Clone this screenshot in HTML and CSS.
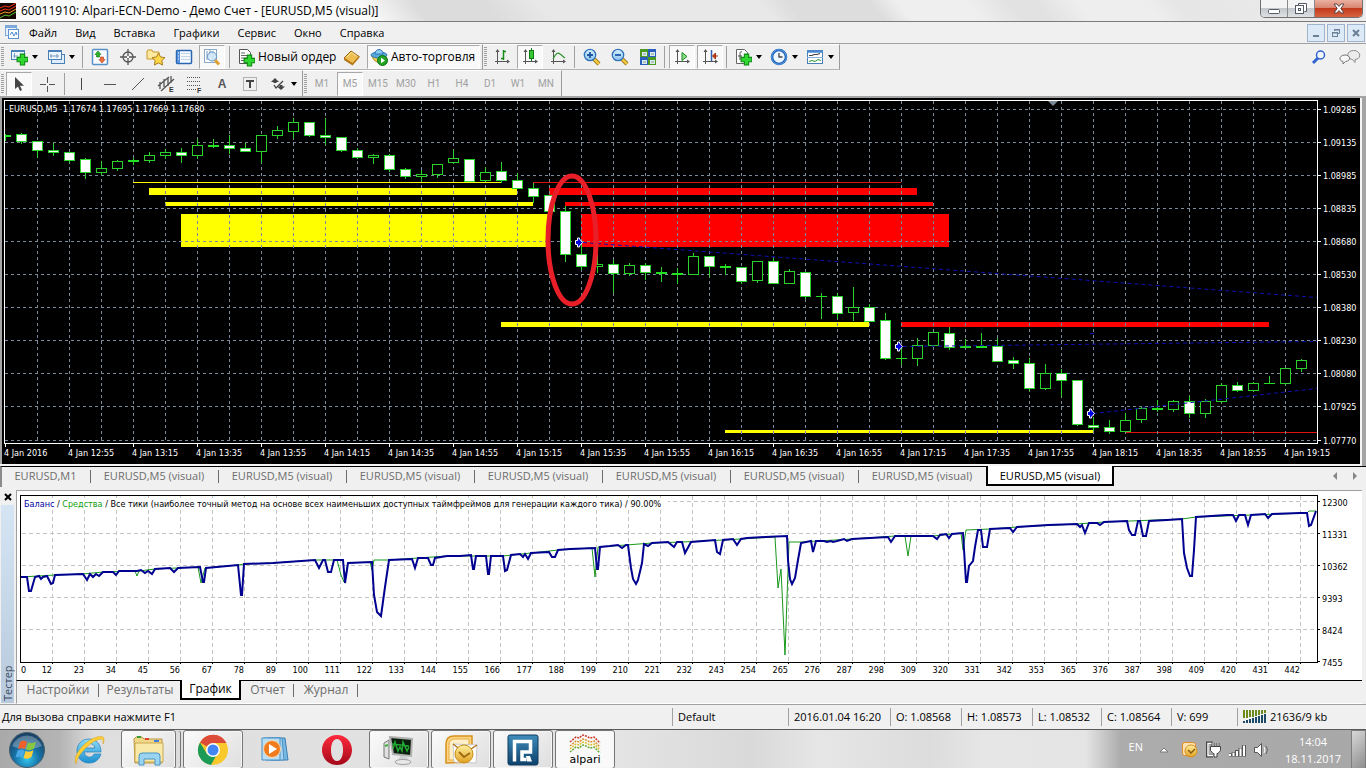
FILE: index.html
```html
<!DOCTYPE html>
<html lang="ru">
<head>
<meta charset="utf-8">
<title>60011910: Alpari-ECN-Demo</title>
<link rel="stylesheet" href="styles.css">
</head>
<body>
<svg class="defs" aria-hidden="true">
  <defs>
    <linearGradient id="glass" x1="0" y1="0" x2="0" y2="1"><stop offset="0" stop-color="#d8f0ff"/><stop offset="1" stop-color="#8cc4f0"/></linearGradient>
    <linearGradient id="gold" x1="0" y1="0" x2="0" y2="1"><stop offset="0" stop-color="#fff0a0"/><stop offset="1" stop-color="#e0a020"/></linearGradient>
    <radialGradient id="orb" cx=".5" cy=".75" r=".75"><stop offset="0" stop-color="#35c8f0"/><stop offset=".45" stop-color="#1774a8"/><stop offset="1" stop-color="#1b3a5c"/></radialGradient>
    <linearGradient id="ie" x1="0" y1="0" x2="0" y2="1"><stop offset="0" stop-color="#8fdcf8"/><stop offset="1" stop-color="#1c8fd0"/></linearGradient>
    <linearGradient id="opera" x1="0" y1="0" x2="0" y2="1"><stop offset="0" stop-color="#ff2a3c"/><stop offset="1" stop-color="#a3081a"/></linearGradient>
    <linearGradient id="tile" x1="0" y1="0" x2="0" y2="1"><stop offset="0" stop-color="#3f8dbb"/><stop offset="1" stop-color="#0e416b"/></linearGradient>
    <symbol id="plus" viewBox="0 0 12 12"><path d="M4 1h4v3h3v4H8v3H4V8H1V4h3z" fill="#2fd62f" stroke="#0b8a12"/></symbol>
    <symbol id="axes" viewBox="0 0 18 18"><path d="M4.500 2v14M2 13.500h14" stroke="#555" fill="none"/><path d="M4.500 1l-2 3h4zM17 13.500l-3-2v4z" fill="#555"/></symbol>
  </defs>
</svg>

<header class="titlebar">
  <svg class="app-icon" width="16" height="16" viewBox="0 0 16 16"><rect width="16" height="16" fill="#140800"/><path d="M0 5l5-2 4 1 7-4M0 8l5-2 4 1 7-4" stroke="#f03018" fill="none"/><path d="M0 11l5-2 4 1 7-4" stroke="#f0a020" fill="none"/><path d="M0 15l5-3 4 1 7-4" stroke="#58c030" fill="none"/></svg>
  <h1 class="title">60011910: Alpari-ECN-Demo - Демо Счет - [EURUSD,M5 (visual)]</h1>
  <div class="window-buttons">
    <button class="wb" aria-label="Свернуть"><svg width="14" height="12"><rect x="1.500" y="6.500" width="11" height="4" rx="1" fill="#fff" stroke="#555a66"/></svg></button>
    <button class="wb" aria-label="Развернуть"><svg width="14" height="13"><path d="M4.500 3.500v-2h8v8h-2" fill="#fff" stroke="#555a66"/><rect x="1.500" y="3.500" width="8" height="8" fill="#fff" stroke="#555a66"/><rect x="4.500" y="6.500" width="2" height="2" fill="none" stroke="#555a66"/></svg></button>
    <button class="wb wb-close" aria-label="Закрыть"><svg width="14" height="12"><path d="M2 1h3l2 2.500L9 1h3L8.800 5.500 12 10H9L7 7.500 5 10H2l3.200-4.500z" fill="#fff" stroke="#5e4444"/></svg></button>
  </div>
</header>

<nav class="menubar">
  <svg width="16" height="16" viewBox="0 0 16 16"><rect x="1.500" y=".5" width="11" height="10" fill="#e8f2fc" stroke="#7ea9d8"/><path d="M1 2h12" stroke="#7ea9d8" stroke-width="2"/><rect x="4.500" y="4.500" width="10" height="9" fill="#fff" stroke="#5c92d0"/><path d="M6 10l2-3 2 4 2-4 1 3" stroke="#4a86cc" fill="none"/></svg>
  <button>Файл</button><button>Вид</button><button>Вставка</button><button>Графики</button><button>Сервис</button><button>Окно</button><button>Справка</button>
  <div class="mdi">
    <button aria-label="Свернуть окно"><svg width="10" height="10"><path d="M2 8h6" stroke="#6b7f95" stroke-width="2"/></svg></button>
    <button aria-label="Восстановить окно"><svg width="10" height="10"><path d="M3.500 3V1.500h5v4H7M3 2h6M1 5h6" stroke="#6b7f95" fill="none"/><rect x="1.500" y="4.500" width="5" height="4" fill="none" stroke="#6b7f95"/></svg></button>
    <button aria-label="Закрыть окно"><svg width="10" height="10"><path d="M2 2l6 6M8 2L2 8" stroke="#6b7f95" stroke-width="2"/></svg></button>
  </div>
</nav>

<div class="toolbar">
  <div class="bar">
    <span class="grip"></span>
    <button class="tool drop" aria-label="Новый график"><svg width="18" height="18"><rect x="1.500" y="2.500" width="13" height="9" fill="#eef6ff" stroke="#4a80b8"/><path d="M1 3h14" stroke="#4a80b8" stroke-width="2"/><path d="M4.500 5v5M3 8h5" stroke="#7a9cc0"/><use href="#plus" x="6" y="5" width="13" height="13"/></svg></button>
    <button class="tool drop" aria-label="Профили"><svg width="18" height="18"><rect x="4.500" y="6.500" width="13" height="9" fill="#e0eefc" stroke="#4a80b8"/><rect x="1.500" y="2.500" width="13" height="9" fill="#eef6ff" stroke="#4a80b8"/><path d="M1 3h14" stroke="#4a80b8" stroke-width="2"/><path d="M4 6v4M3 8h9M10 6v4" stroke="#7a9cc0"/></svg></button>
    <span class="sep"></span>
    <button class="tool" aria-label="Обзор рынка"><svg width="18" height="18"><rect x="1.500" y="1.500" width="15" height="15" rx="1" fill="#f8fcff" stroke="#5a90c8" stroke-width="1.500"/><path d="M7 3l3 3.500H8.500V9h-3V6.500H4z" fill="#30b030" stroke="#087808" stroke-width=".6"/><path d="M11 15l-3-3.500h1.500V9h3v2.500H14z" fill="#f07040" stroke="#b03010" stroke-width=".6"/></svg></button>
    <button class="tool" aria-label="Окно данных"><svg width="18" height="18"><circle cx="9" cy="9" r="5" fill="none" stroke="#555" stroke-width="1.300"/><path d="M9 1v7M9 10v7M1 9h7M10 9h7" stroke="#555" stroke-width="1.300"/></svg></button>
    <button class="tool" aria-label="Навигатор"><svg width="20" height="18"><path d="M1 11V3l1-1h4l1 2h6v7z" fill="#ffe9a0" stroke="#c8982c"/><path d="M12.500 5l2 4 4.500.6-3.200 3 .8 4.400-4.100-2.100L8.400 17l.8-4.400L6 9.600l4.500-.6z" fill="#ffd84a" stroke="#a87c18"/></svg></button>
    <button class="tool" aria-label="Терминал"><svg width="18" height="18"><rect x="1.500" y="2.500" width="15" height="13" rx="1" fill="#f4faff" stroke="#2866b0" stroke-width="1.500"/><rect x="2" y="3" width="3" height="12" fill="#5590dc"/><path d="M6 5.500h9M6 8.500h9M6 11.500h9" stroke="#c4d4e4"/><path d="M3 5h1M3 8h1M3 11h1" stroke="#fff"/></svg></button>
    <button class="tool pressed" aria-label="Тестер"><svg width="18" height="18"><rect x="1.500" y="1.500" width="12" height="13" fill="#fff" stroke="#8aa8c8"/><path d="M4 3v9M7 2v7M10 3v9" stroke="#7a98b8"/><path d="M12 12l4 4.500" stroke="#e0a030" stroke-width="3"/><circle cx="9" cy="8.500" r="4.500" fill="#cfe8fa" fill-opacity=".8" stroke="#5f93c4"/></svg></button>
    <span class="sep"></span>
    <button class="tool labelled order"><svg width="18" height="20"><path d="M2.500 2.500h8l3 3v11h-11z" fill="#fff" stroke="#555"/><path d="M4 6h4M4 8.500h7M4 11h7M4 13.500h4" stroke="#666"/><use href="#plus" x="6" y="7" width="13" height="13"/></svg>Новый ордер</button>
    <button class="tool" aria-label="MetaEditor"><svg width="18" height="18"><path d="M1 10L8 3l8 5.500-6.500 7.500z" fill="#f0bd50" stroke="#9a6414"/><path d="M1 10v2l8.500 5.500 7-8v-1.500L9.500 15z" fill="#b47818"/><path d="M4 9l4.500-4.500 5 3.500" stroke="#ffe8a0" fill="none"/></svg></button>
    <button class="tool labelled pressed auto"><svg width="18" height="18"><path d="M2 8c2 8 12 9 14 0z" fill="#f0c850" stroke="#b08a20"/><ellipse cx="9" cy="7" rx="8" ry="3" fill="#58a8dc" stroke="#2f78b0"/><path d="M5 6c0-6 8-6 8 0z" fill="#8cccf0" stroke="#2f78b0"/><circle cx="12.500" cy="12.500" r="5" fill="#22a322" stroke="#107010"/><path d="M11 9.800v5.400l4-2.700z" fill="#fff"/></svg>Авто-торговля</button>
  </div>
  <div class="bar charting">
    <span class="grip"></span>
    <button class="tool" aria-label="Бары"><svg width="18" height="18"><use href="#axes" width="18" height="18"/><path d="M10.500 2v10M8 10.500h2.500M10.500 3.500H13" stroke="#188a18" stroke-width="1.500" fill="none"/></svg></button>
    <button class="tool pressed" aria-label="Свечи"><svg width="18" height="18"><use href="#axes" width="18" height="18"/><path d="M10.500 0v13" stroke="#0b7a12"/><rect x="8.500" y="2.500" width="4" height="8" fill="#36c636" stroke="#0b7a12"/></svg></button>
    <button class="tool" aria-label="Линия"><svg width="18" height="18"><use href="#axes" width="18" height="18"/><path d="M4 11c3-6 5-7 7-5 2 1 3 3 5 4" stroke="#2a942a" fill="none" stroke-width="1.200"/></svg></button>
    <span class="sep"></span>
    <button class="tool" aria-label="Приблизить"><svg width="18" height="18"><path d="M11 11l5 5" stroke="#8a6414" stroke-width="4"/><path d="M11 11l5 5" stroke="#f0c840" stroke-width="2.500"/><circle cx="7" cy="7" r="5.700" fill="url(#glass)" stroke="#2f72b8" stroke-width="1.300"/><path d="M4 7h6M7 4v6" stroke="#2058a0" stroke-width="1.800"/></svg></button>
    <button class="tool" aria-label="Отдалить"><svg width="18" height="18"><path d="M11 11l5 5" stroke="#8a6414" stroke-width="4"/><path d="M11 11l5 5" stroke="#f0c840" stroke-width="2.500"/><circle cx="7" cy="7" r="5.700" fill="url(#glass)" stroke="#2f72b8" stroke-width="1.300"/><path d="M4 7h6" stroke="#2058a0" stroke-width="1.800"/></svg></button>
    <button class="tool" aria-label="Плитка"><svg width="18" height="18"><path d="M1 1h8v8H1zM9 9h8v8H9z" fill="#4a9a24"/><path d="M9 1h8v8H9zM1 9h8v8H1z" fill="#2a5fc0"/><path d="M3 4h5v4H3zM11 4h5v4h-5zM3 12h5v4H3zM11 12h5v4h-5z" fill="#dceaf4"/><path d="M4 6h3M12 6h3M4 14h3M12 14h3" stroke="#7fa080"/></svg></button>
    <span class="sep"></span>
    <button class="tool pressed" aria-label="Автопрокрутка"><svg width="18" height="18"><use href="#axes" width="18" height="18"/><path d="M9 4.500v8l5-4z" fill="#8cdc8c" stroke="#188a18"/></svg></button>
    <button class="tool pressed" aria-label="Сдвиг графика"><svg width="18" height="18"><use href="#axes" width="18" height="18"/><path d="M10.500 2v11" stroke="#2f62b0" stroke-width="1.500"/><path d="M17 8h-5M14.500 5L11.500 8l3 3z" fill="#d04a20" stroke="#a83010"/></svg></button>
    <span class="sep"></span>
    <button class="tool drop" aria-label="Индикаторы"><svg width="18" height="18"><path d="M2.500 1.500h8l3 3v11h-11z" fill="#fff" stroke="#666"/><path d="M8 4C6 3 6 5 6 7v5M4 8h4" stroke="#444" fill="none"/><use href="#plus" x="6" y="5" width="13" height="13"/></svg></button>
    <button class="tool drop" aria-label="Периоды"><svg width="18" height="18"><circle cx="9" cy="9" r="7" fill="#eef6ff" stroke="#1c5cb0" stroke-width="2.600"/><circle cx="9" cy="9" r="7.300" fill="none" stroke="#5ca4ec"/><path d="M9 5v4h3.500" stroke="#444" fill="none" stroke-width="1.300"/></svg></button>
    <button class="tool drop" aria-label="Шаблоны"><svg width="18" height="18"><rect x="1.500" y="2.500" width="15" height="13" fill="#fff" stroke="#4a80b8"/><path d="M1 3.500h16" stroke="#4a88d0" stroke-width="2.500"/><path d="M1 9.500h16" stroke="#8ab0d8"/><path d="M3 7.500h3l2-1h3l3-1" stroke="#444" fill="none" stroke-width="1.200"/><path d="M3 13.500l3-1 3 1 3-2 3 1" stroke="#2a942a" fill="none"/></svg></button>
  </div>
  <div class="bar-right">
    <button class="tool" aria-label="Поиск"><svg width="16" height="16"><path d="M2 14l5-5" stroke="#2f62d0" stroke-width="3"/><circle cx="9.500" cy="6" r="4" fill="#f4f8ff" stroke="#2f62d0" stroke-width="1.500"/></svg></button>
    <button class="tool" aria-label="Чат"><svg width="22" height="18"><path d="M16 11.500v3l-2.500-3C6 10.500 8 2.500 14.500 2.500c7.500 0 8.500 8.500 1.500 9z" fill="#ececec" stroke="#8a8a8a"/><path d="M4 13.500v2.500l2.500-2.500c6-.5 5-6.500-.5-6.500s-7 5.500-2 6.500z" fill="#f8f8f8" stroke="#777"/></svg></button>
  </div>
</div>

<div class="toolbar">
  <div class="bar lower">
    <span class="grip"></span>
    <button class="tool pressed" aria-label="Курсор"><svg width="18" height="18"><path d="M5 2v12l3-2.500L10 16l2-1-2-4.200h4z" fill="#444"/></svg></button>
    <button class="tool" aria-label="Перекрестие"><svg width="18" height="18"><path d="M9.500 2v6M9.500 11v6M2 9.500h6M11 9.500h6" stroke="#555"/></svg></button>
    <span class="sep"></span>
    <button class="tool" aria-label="Вертикальная линия"><svg width="18" height="18"><path d="M8.500 3v12" stroke="#444"/></svg></button>
    <button class="tool" aria-label="Горизонтальная линия"><svg width="18" height="18"><path d="M3 9.500h12" stroke="#555"/></svg></button>
    <button class="tool" aria-label="Трендовая линия"><svg width="18" height="18"><path d="M3 15L15 3" stroke="#555"/></svg></button>
    <button class="tool" aria-label="Канал"><svg width="18" height="18"><path d="M1 11L12 2M4 16L17 4M3 7v7M7 4v8M11 3v8M14 1v7" stroke="#555" stroke-width="1.300"/><text x="12" y="17" class="glyph">E</text></svg></button>
    <button class="tool" aria-label="Фибоначчи"><svg width="18" height="18"><path d="M2 2.500h14M2 6.500h14M2 10.500h14M2 14.500h9" stroke="#555" stroke-dasharray="1 1"/><text x="12" y="18" class="glyph">F</text></svg></button>
    <button class="tool letter">A</button>
    <button class="tool" aria-label="Метка"><svg width="18" height="18"><rect x="2.500" y="2.500" width="13" height="13" fill="none" stroke="#777" stroke-dasharray="1 1"/><path d="M5 6h8M9 6v7" stroke="#444" stroke-width="2"/></svg></button>
    <button class="tool drop" aria-label="Стрелки"><svg width="18" height="18"><path d="M6 3l4 4H7.500v1h-3V7H2zM12 15l-4-3.500h2.500V10h3v1.500H16z" fill="#444"/><path d="M5 10l2 3 7-7" stroke="#444" stroke-width="1.300" fill="none"/></svg></button>
  </div>
  <div class="bar lower periods">
    <span class="grip"></span>
    <button class="tool">M1</button><button class="tool pressed">M5</button><button class="tool">M15</button><button class="tool">M30</button><button class="tool">H1</button><button class="tool">H4</button><button class="tool">D1</button><button class="tool">W1</button><button class="tool">MN</button>
  </div>
</div>

<main>
  <section class="market">
    <svg id="market" class="chart" viewBox="0 96 1366 370" role="img" aria-label="EURUSD,M5"></svg>
  </section>
  <nav class="tabs doc-tabs">
    <button>EURUSD,M1</button><button>EURUSD,M5 (visual)</button><button>EURUSD,M5 (visual)</button><button>EURUSD,M5 (visual)</button><button>EURUSD,M5 (visual)</button><button>EURUSD,M5 (visual)</button><button>EURUSD,M5 (visual)</button><button>EURUSD,M5 (visual)</button><button class="active">EURUSD,M5 (visual)</button>
    <svg class="tab-arrows" width="26" height="10"><path d="M5 1v8L1 5zM21 1v8l4-4z" fill="#858585"/></svg>
  </nav>
  <section class="tester">
    <aside class="tester-side">
      <button aria-label="Закрыть тестер"><svg width="8" height="8"><path d="M1 1l6 6M7 1L1 7" stroke="#000" stroke-width="2"/></svg></button>
      <span class="tester-name">Тестер</span>
    </aside>
    <div class="tester-body">
      <svg id="tester" class="chart" viewBox="16 491 1346 189" role="img" aria-label="График баланса"></svg>
      <nav class="tabs report-tabs">
        <button>Настройки</button><button>Результаты</button><button class="active">График</button><button>Отчет</button><button>Журнал</button>
      </nav>
    </div>
  </section>
</main>

<footer class="status">
  <span>Для вызова справки нажмите F1</span><span>Default</span><span>2016.01.04 16:20</span><span>O: 1.08568</span><span>H: 1.08573</span><span>L: 1.08532</span><span>C: 1.08564</span><span>V: 699</span>
  <span class="traffic"><svg width="24" height="14" viewBox="0 0 24 14"><path d="M1 0v8M4 0v8M7 0v7M10 0v7M13 0v6M16 0v5M19 0v4M22 0v3" stroke="#6d8a1c" stroke-width="2"/><path d="M1 11v2M4 10v3M7 9v4M10 8v5M13 7v6M16 6v7M19 5v8M22 4v9" stroke="#1d4a66" stroke-width="2"/></svg>21636/9 kb</span>
</footer>

<nav class="taskbar">
  <button class="start" aria-label="Пуск"><svg width="38" height="38" viewBox="0 0 38 38"><circle cx="19" cy="19" r="17.500" fill="url(#orb)" stroke="#46606f"/><path d="M4 15a16 16 0 0 1 30 0c-8 4-22 4-30 0z" fill="#fff" opacity=".28"/><path d="M12 11c3-2 5-1 7 0l-2 7c-2-1-4-1-7 0z" fill="#f0602c"/><path d="M20 11.500c3 1 5 1 8-1l-2 7c-3 2-5 2-8 1z" fill="#88c840"/><path d="M9.500 19.500c3-1.500 5-1 7 0l-2 7c-2-1-4-1-7 0z" fill="#48a8e8"/><path d="M17.500 20c3 1 5 1 8-1l-2 7c-3 2-5 2-8 1z" fill="#ffcc38"/></svg></button>
  <button class="task" aria-label="Internet Explorer"><svg width="34" height="34" viewBox="0 0 34 34"><path d="M29 21c-2 6-6 9-12 9C10 30 5 25 5 18S10 6 17 6s12 5 12 13H12c1 6 8 7 10 2zM12 15h11c-1-6-10-6-11 0z" fill="url(#ie)" stroke="#1a80be" stroke-width=".7"/><path d="M4 31C0 24 11 8 25 4c8-2 8 2 6 7 1-5-1-6-6-4C15 11 4 25 4 31z" fill="#ffd038" stroke="#d09c14" stroke-width=".5"/></svg></button>
  <button class="task running stacked" aria-label="Проводник"><svg width="34" height="34" viewBox="0 0 34 34"><path d="M2 6l2-2h6l2 2h18v24H3z" fill="#f0d888" stroke="#b89440"/><path d="M5 4h4" stroke="#3a9b3a" stroke-width="2"/><path d="M13 6h4" stroke="#e04030" stroke-width="2"/><path d="M22 8h5" stroke="#4080d8" stroke-width="2"/><path d="M3 10h28v19H3z" fill="#f8e9a8" stroke="#caa850"/><path d="M7 32v-9q0-3 3-3h15q3 0 3 3v9h-5v-6H12v6z" fill="#9ad4f0" stroke="#4a96c8"/></svg></button>
  <button class="task running" aria-label="Chrome"><svg width="32" height="32" viewBox="0 0 32 32"><circle cx="16" cy="16" r="15" fill="#f8c82c"/><path d="M16 16L3 8.500A15 15 0 0 1 29.500 9H16z" fill="#dd4b39"/><path d="M3 8.500L10 20l6 3 4-3-6 11A15 15 0 0 1 3 8.500z" fill="#1b9b55"/><circle cx="16" cy="16" r="7" fill="#fff"/><circle cx="16" cy="16" r="5.500" fill="#4285f4"/></svg></button>
  <button class="task" aria-label="Media Player"><svg width="32" height="30" viewBox="0 0 32 30"><path d="M9 3h17l3 22H12z" fill="#78b8e0" stroke="#3c80b4"/><path d="M5 3h18l2 22H7z" fill="#a8d4f0" stroke="#4a90c4"/><path d="M3 3h18v22H3z" fill="#b8def4" stroke="#4a90c4"/><circle cx="13" cy="14" r="8.500" fill="#f07c20" stroke="#fbd8b0"/><path d="M10 9v10l8-5z" fill="#fff"/></svg></button>
  <button class="task" aria-label="Opera"><svg width="32" height="32" viewBox="0 0 32 32"><path fill-rule="evenodd" d="M16 1C7 1 1 8 1 16s6 15 15 15 15-7 15-15S25 1 16 1zm0 4c4 0 6 5 6 11s-2 11-6 11-6-5-6-11 2-11 6-11z" fill="url(#opera)"/></svg></button>
  <button class="task running" aria-label="Монитор"><svg width="34" height="32" viewBox="0 0 34 32"><path d="M2 9l5-3v19l-5-2z" fill="#e0e0e0" stroke="#777"/><path d="M3 12l3-1" stroke="#3db03d" stroke-width="2"/><path d="M8 3l22 2-1 17-18-2z" fill="#0a1e0c" stroke="#b0b0b0" stroke-width="2"/><path d="M11 15l2-7 3 9 2-4 2 4 1-9 4 9 2-4M10 10l17 2" stroke="#22a834" stroke-width="1.500" fill="none"/><path d="M18 22l-2 5h11l-3-5z" fill="#d0d0d0"/><ellipse cx="21" cy="28" rx="8" ry="2.500" fill="#e8e8e8" stroke="#a0a0a0"/></svg></button>
  <button class="task running" aria-label="Outlook"><svg width="36" height="32" viewBox="0 0 36 32"><path d="M3 29V10q0-8 8-8h18v26z" fill="#fbd583" stroke="#d8901c" stroke-width="1.500"/><path d="M6 26V11q0-6 6-6h14v21z" fill="#fff0c8" stroke="#e8aa40"/><path d="M10 10l24 1-1 18-22-1z" fill="#fff" stroke="#c8c8c8"/><path d="M10 10l12 9 12-8" fill="none" stroke="#b07820" stroke-width="1.500"/><circle cx="21" cy="20" r="9" fill="url(#gold)" stroke="#c88c14"/><path d="M16 18l5 5 6-4" stroke="#a06c10" stroke-width="2" fill="none"/></svg></button>
  <button class="task running" aria-label="R"><svg width="32" height="32" viewBox="0 0 32 32"><rect x="1" y="1" width="30" height="30" rx="2" fill="url(#tile)" stroke="#0c3c60"/><path d="M7.500 27.500V7.500H23.500V18H15v7.500h4.500" stroke="#fff" stroke-width="3.500" fill="none"/><path d="M19 22h4l2 5.500h-5z" fill="#fff"/></svg></button>
  <button class="task running current"><svg width="32" height="19" viewBox="0 0 32 19"><g fill="none" stroke-width="1.500" stroke-dasharray="2 1"><path d="M1 8l6-5 3 1 4-3 3 1 4 2 4-1 6 6" stroke="#c83a28"/><path d="M1 12l6-5 3 1 4-3 3 1 4 2 4-1 6 6" stroke="#d89030"/><path d="M1 15l6-5 3 1 4-3 3 1 4 2 4-1 6 6" stroke="#d8c030"/><path d="M1 18l6-5 3 1 4-3 3 1 4 2 4-1 6 6" stroke="#6aa838"/></g></svg><span>alpari</span></button>
  <div class="tray">
    <span class="lang">EN</span>
    <svg class="more" width="10" height="8"><path d="M1 6l4-4 4 4z" fill="#fff" stroke="#777"/></svg>
    <svg width="18" height="18"><rect x="1.500" y="1.500" width="13" height="13" rx="2" fill="#fbe0b0" stroke="#e08a28"/><circle cx="10" cy="10" r="6" fill="url(#gold)" stroke="#d8901c"/><path d="M7 9l3 3 4-4" stroke="#8a5a10" stroke-width="1.500" fill="none"/></svg>
    <svg width="18" height="18"><path d="M8 2H2.500v13H8" fill="none" stroke="#444" stroke-width="3"/><path d="M8 2.500H3v12h5" fill="none" stroke="#fff" stroke-width="1.500"/><path d="M8 2v3M13 2v3" stroke="#444" stroke-width="3"/><path d="M8 2v3M13 2v3" stroke="#fff"/><path d="M5.500 5.500h10v4l-2.500 3h-1V16H9v-3.500H8l-2.500-3z" fill="#fff" stroke="#444"/></svg>
    <svg width="18" height="16"><path d="M1 14.500v-3M4.500 14.500v-4M8 14.500V8M11.500 14.500V6M15 14.500V3" stroke="#555" stroke-width="4"/><path d="M1 14v-2M4.500 14v-3M8 14V9M11.500 14V6.500M15 14V3.500" stroke="#fff" stroke-width="2"/></svg>
    <svg width="16" height="16"><path d="M1.500 5.500h3l4-4v13l-4-4h-3z" fill="#fff" stroke="#555"/><path d="M11 5q2 3 0 6" stroke="#fff" fill="none"/><path d="M13 4q3 4 0 8" stroke="#666" fill="none"/></svg>
    <time class="clock">14:04<br>18.11.2017</time>
    <button class="desktop" aria-label="Показать рабочий стол"></button>
  </div>
</nav>
<script src="charts.js"></script>
</body>
</html>
```

FILE: styles.css
```css
* { box-sizing: border-box; }
body {
  margin: 0;
  min-height: 100vh;
  display: flex;
  flex-direction: column;
  background: #f0f0f0;
  color: #000;
  font: 11px/16px "Open Sans", "Noto Sans", sans-serif;
}
button { border: 0; padding: 0; margin: 0; background: none; color: inherit; font: inherit; white-space: nowrap; }
svg { display: block; flex: none; }
.defs { position: absolute; width: 0; height: 0; }

.titlebar {
  display: flex;
  align-items: center;
  gap: 5px;
  height: 22px;
  border-bottom: 1px solid #7c7c7c;
  background: linear-gradient(50deg, #fafafa 0 27%, #dcdcdc 31% 36%, #e8e8e8 40% 56%, #dddddd 58% 64%, #efefef 66% 71%, #e2e2e2 74% 76%, #eeeeee 79% 84%, #e6e6e6 86%, #ededed);
}
.title { margin: 0; font-size: 12px; font-weight: 400; flex: 1; }
.window-buttons {
  display: flex;
  align-self: flex-start;
  margin-right: 3px;
  height: 18px;
  border: 1px solid #707070;
  border-top: 0;
  border-radius: 0 0 5px 5px;
  overflow: hidden;
}
.wb { width: 27px; display: grid; place-items: center; border-right: 1px solid #8a8a8a; background: linear-gradient(#f4f4f4 45%, #c4c7cb 50%, #dfe1e4); }
.wb-close { width: 47px; border-right: 0; background: linear-gradient(#eab0a0 0%, #d98672 45%, #c23a1c 50%, #d8633f); }

.menubar { display: flex; align-items: center; gap: 18px; height: 22px; padding: 0 1px 0 4px; border-bottom: 1px solid #a0a0a0; }
.menubar > svg { margin-right: -9px; }
.mdi { display: flex; gap: 2px; margin-left: auto; }
.mdi button { width: 18px; height: 18px; display: grid; place-items: center; background: #dce9f7; border: 1px solid #9fb4cc; }

.toolbar { display: flex; height: 26px; }
.bar { display: flex; align-items: center; height: 26px; border-right: 1px solid #9a9a9a; border-bottom: 1px solid #b4b4b4; padding-right: 1px; border-top: 1px solid #fff; }
.bar.lower { border-bottom: 0; }
.grip { width: 3px; height: 20px; margin: 0 1px; background: repeating-linear-gradient(#a0a0a0 0 1px, transparent 1px 2px); }
.sep { width: 1px; height: 22px; margin: 0 3px; background: #a0a0a0; }
.charting .sep { margin: 0 3px 0 2px; }
.tool { width: 26px; height: 24px; margin: 0 1px; display: flex; align-items: center; justify-content: center; }
.tool.pressed { background: #f9f9f9; border: 1px solid #a8a8a8; border-right-color: #fff; border-bottom-color: #fff; }
.tool.drop { width: 35px; gap: 4px; }
.charting .drop { width: 34px; }
.tool.drop::after { content: ""; border: 3px solid transparent; border-top: 4px solid #000; border-bottom: 0; }
.tool.labelled { font-size: 12px; gap: 3px; }
.tool.order { width: 103px; justify-content: flex-start; padding-left: 3px; }
.tool.auto { width: 113px; justify-content: flex-start; padding-left: 2px; }
.tool.letter { font: bold 12px/16px "Liberation Sans", sans-serif; color: #555; }
.glyph { font: bold 7px "Liberation Sans", sans-serif; fill: #333; }
.bar-right { display: flex; align-items: center; margin-left: auto; gap: 3px; padding-right: 2px; }
.periods { font: 10px/16px Roboto, sans-serif; color: #a0a0a0; }

.chart { width: 100%; height: auto; font: 9px "DejaVu Sans Condensed", "DejaVu Sans", sans-serif; }
.chart text { white-space: pre; }
.market { background: #a4a4a4; }

.tabs { display: flex; color: #6d6d6d; border-top: 1px solid #000; }
.tabs button { position: relative; height: 20px; }
.tabs button::after { content: ""; position: absolute; right: 0; top: 3px; height: 13px; width: 1px; background: #6d6d6d; }
.tabs .active { background: #fff; color: #000; border: 2px solid #000; border-top: 0; margin-top: -1px; }
.tabs .active::after { display: none; }
.doc-tabs { border-left: 2px solid #8a8a8a; height: 21px; margin-bottom: 1px; align-items: flex-start; }
.doc-tabs button { width: 128px; padding: 0 2px 2px 0; }
.doc-tabs button:first-child { width: 89px; }
.doc-tabs .active { padding: 2px 0 0; margin-left: -1px; }
.tab-arrows { margin: 4px 8px 0 auto; }

.tester { display: flex; align-items: stretch; padding-top: 2px; }
.tester-side { width: 16px; padding: 3px 1px 1px; display: flex; flex-direction: column; gap: 4px; }
.tester-side button { height: 8px; display: grid; place-items: center; }
.tester-name { flex: 1; width: 13px; line-height: 13px; writing-mode: vertical-rl; transform: rotate(180deg); padding-top: 2px; color: #394a5c; background: linear-gradient(#b7c9dc, #d5e5f4); }
.tester-body { flex: 1; margin-right: 4px; border-top: 1px solid #a0a0a0; }
.report-tabs { border-left: 1px solid #a0a0a0; border-bottom: 1px solid #fff; height: 24px; font-size: 12px; }
.report-tabs button { width: 82px; padding-bottom: 2px; }
.report-tabs .active { width: 61px; margin-left: -1px; padding-bottom: 0; }
.report-tabs button:nth-child(2)::after { display: none; }
.report-tabs button:nth-child(4) { width: 53px; }
.report-tabs button:nth-child(5) { width: 64px; }

.status { display: flex; align-items: center; height: 25px; margin-top: auto; border-top: 1px solid #a0a0a0; }
.status span { height: 18px; line-height: 18px; padding-left: 5px; width: 71px; border-left: 1px solid #a0a0a0; white-space: nowrap; }
.status span:first-child { flex: 1; border: 0; padding-left: 2px; }
.status span:nth-child(2) { width: 116px; }
.status span:nth-child(3) { width: 102px; }
.status span:nth-child(6) { width: 69px; }
.status span:nth-child(7) { width: 70px; }
.status span:nth-child(8) { width: 66px; }
.status .traffic { display: flex; align-items: center; gap: 3px; width: 129px; }

.taskbar {
  display: flex;
  align-items: stretch;
  height: 40px;
  border-top: 1px solid #5a5a5a;
  background: linear-gradient(90deg, #a9a9a9, #b4b4b4 60px, #dedede 95px, #e4e4e4 45%, #d9d9d9 55%, #e6e6e6 60%, #dcdcdc 68%, #e6e6e6 72%, #e4e4e4 calc(100% - 280px), #acacac calc(100% - 245px), #a8a8a8);
}
.start { width: 54px; margin-right: 5px; display: grid; place-items: center; }
.task { width: 60px; margin-right: 2px; display: flex; flex-direction: column; align-items: center; justify-content: center; }
.running { border: 1px solid #767676; border-radius: 3px; background: linear-gradient(135deg, #fbfbfb, #dedede); box-shadow: inset 0 0 0 1px #f6f6f6; }
.stacked { width: 55px; margin-right: 7px; box-shadow: inset 0 0 0 1px #f6f6f6, 5px 0 0 -1px #dcdcdc, 6px 0 0 -1px #767676; }
.current { background: #f9f9f9; }
.current span { font: 11px/13px "DejaVu Sans", sans-serif; }
.tray { margin-left: auto; display: flex; align-items: center; color: #fff; }
.tray svg { margin-right: 6px; }
.tray .more { margin-right: 12px; }
.lang { margin-right: 16px; margin-bottom: 6px; }
.clock { width: 76px; text-align: center; line-height: 17px; }
.desktop { width: 15px; height: 39px; border: 1px solid #7e7e7e; background: linear-gradient(135deg, #d8d8d8, #8e8e8e); }
```

FILE: charts.js
```js
const NS = "http://www.w3.org/2000/svg";

function add(parent, name, attrs, text) {
  const el = document.createElementNS(NS, name);
  for (const key in attrs) el.setAttribute(key, attrs[key]);
  if (text !== undefined) el.textContent = text;
  parent.appendChild(el);
  return el;
}
const rect = (p, x, y, width, height, fill, more) => add(p, "rect", Object.assign({ x, y, width, height, fill }, more));
const path = (p, d, stroke, more) => add(p, "path", Object.assign({ d, stroke, fill: "none" }, more));

/* Price chart. Candle: high, body top, body bottom, low, kind
   (w = bearish, b = bullish, d = flat) */
const candles = [
  [134,135,137,141,"d"],[133,134,142,144,"w"],[141,141,151,158,"w"],[143,150,153,156,"w"],[152,152,161,163,"w"],
  [158,159,173,179,"w"],[161,168,173,175,"b"],[160,161,169,171,"b"],[158,160,162,165,"d"],[152,155,161,163,"b"],
  [149,152,156,159,"b"],[148,152,156,163,"w"],[139,145,156,159,"b"],[139,145,147,148,"d"],[135,145,149,154,"w"],
  [143,148,152,152,"w"],[135,135,152,163,"b"],[126,130,136,139,"b"],[118,122,132,138,"b"],[122,122,136,137,"w"],
  [118,135,138,145,"w"],[137,137,151,152,"w"],[148,150,158,159,"w"],[154,155,158,164,"b"],[154,155,170,172,"w"],
  [168,169,177,179,"w"],[170,174,177,181,"b"],[164,164,175,178,"b"],[150,158,163,164,"b"],[159,159,182,182,"w"],
  [167,172,181,182,"b"],[162,171,181,183,"w"],[173,180,189,189,"w"],[183,188,197,203,"w"],[195,195,212,212,"w"],
  [206,211,255,262,"w"],[243,254,267,270,"w"],[253,264,267,273,"b"],[260,264,274,293,"w"],[263,265,274,276,"b"],
  [263,265,273,280,"w"],[267,272,274,282,"d"],[268,273,275,284,"d"],[253,256,275,275,"b"],[256,256,267,277,"w"],
  [264,266,268,275,"d"],[267,267,282,284,"w"],[261,261,281,283,"b"],[258,261,284,284,"w"],[269,271,284,284,"b"],
  [272,272,297,299,"w"],[293,296,297,319,"d"],[293,296,314,319,"w"],[287,307,313,321,"b"],[304,307,322,322,"w"],
  [313,320,359,360,"w"],[346,358,359,365,"d"],[338,345,359,366,"b"],[332,332,346,346,"b"],[327,333,348,350,"w"],
  [339,346,348,348,"d"],[333,346,348,348,"d"],[338,346,362,362,"w"],[357,360,364,369,"w"],[358,363,389,391,"w"],
  [364,373,389,390,"b"],[369,373,381,397,"w"],[380,380,425,426,"w"],[417,425,428,431,"w"],[420,427,432,434,"w"],
  [413,420,432,432,"b"],[407,408,420,423,"b"],[400,408,410,412,"d"],[400,401,410,412,"b"],[396,401,414,418,"w"],
  [399,401,414,418,"b"],[383,385,402,403,"b"],[382,385,391,392,"w"],[382,383,391,391,"b"],[376,383,384,384,"d"],
  [368,368,384,385,"b"],[359,360,369,372,"b"]
];
const prices = ["1.09285","1.09135","1.08985","1.08835","1.08680","1.08530","1.08380","1.08230","1.08080","1.07925","1.07770"];
const times = ["2016","12:55","13:15","13:35","13:55","14:15","14:35","14:55","15:15","15:35","15:55","16:15","16:35","16:55","17:15","17:35","17:55","18:15","18:35","18:55","19:15"];
const zones = [
  [133,182,369,1,"#ffff00"],[149,188,368,7,"#ffff00"],[165,202,368,4,"#ffff00"],[181,214,368,33,"#ffff00"],
  [501,322,368,5,"#ffff00"],[725,430,368,3,"#ffff00"],
  [533,182,368,1,"#e01010"],[549,188,368,7,"#ff0000"],[565,202,368,4,"#ff0000"],[581,214,368,33,"#ff0000"],
  [901,322,368,5,"#ff0000"],[1125,432,192,1,"#e01010"]
];

function drawMarket(svg) {
  const g = add(svg, "g", { "shape-rendering": "crispEdges" });
  rect(g, 2, 98, 1358, 366, "#000");
  rect(g, 1360, 98, 2, 368, "#f4f4f4");
  rect(g, 0, 464, 1362, 2, "#f4f4f4");
  zones.forEach(z => rect(g, ...z));
  prices.forEach((p, i) => {
    const y = i === 10 ? 440 : 109 + 33 * i;
    path(g, `M5 ${y}.5H1317`, "#7c8b9a", { "stroke-dasharray": "3 3" });
    path(g, `M1318 ${y}.5h3`, "#fff");
    add(svg, "text", { x: 1323, y: y + 4, fill: "#fff" }, p);
  });
  for (let x = 37; x < 1317; x += 32) path(g, `M${x}.5 101V443`, "#7c8b9a", { "stroke-dasharray": "3 3" });
  rect(g, 8, 104, 203, 9, "#000", { opacity: 0.5 });
  candles.forEach(([hi, top, bot, lo, kind], i) => {
    const x = 5 + 16 * i;
    rect(g, x, hi, 1, lo - hi, "#2cd22c");
    const left = i ? x - 5 : x, width = i ? 11 : 6;
    if (kind === "d") rect(g, left, top, width, bot - top, "#22e022");
    else rect(g, left + 0.5, top + 0.5, width - 1, bot - top - 1, kind === "w" ? "#fff" : "#000", { stroke: "#2cd22c" });
  });
  path(svg, "M583 242.500L1317 297.500M903 346.500L1317 341.500M1093 413.500L1317 388.500M1090 333.500h7", "#1010b0", { "stroke-dasharray": "4 3" });
  path(g, "M4.500 443.500V100.500H1317.500V443.500Z", "#fff");
  times.forEach((t, i) => {
    path(g, `M${5 + 64 * i}.5 444v3`, "#fff");
    add(svg, "text", { x: 4 + 64 * i, y: 456, fill: "#fff" }, "4 Jan " + t);
  });
  [[578, 242], [898, 346], [1090, 413]].forEach(([x, y]) =>
    path(svg, `M${x - 2.5} ${y - 1.5}h2v-2.500h2v1l3 3.500-3 3.500v1h-2v-2.500h-2z`, "#fff", { fill: "#0000e0" }));
  add(svg, "path", { d: "M1048 101h10l-5 5z", fill: "#7c8b9a" });
  add(svg, "ellipse", { cx: 572, cy: 240, rx: 24, ry: 64, fill: "none", stroke: "#e81f28", "stroke-width": 5 });
  add(svg, "text", { x: 9, y: 112, fill: "#fff" }, "EURUSD,M5  1.17674 1.17695 1.17669 1.17680");
}

/* Tester report */
const balance = "21,577 27,577 29,591 31,591 35,577 39,576 41,579 43,577 47,576 51,584 53,583 55,575 83,574 87,580 90,574 93,577 96,574 99,576 103,572 113,572 116,575 119,571 137,571 141,570 145,573 148,571 152,574 155,569 170,568 174,572 178,568 200,567 203,582 204,582 206,568 238,565 241,595 242,595 244,564 273,563 315,560 319,568 323,560 325,560 328,572 331,572 334,560 343,560 345,583 348,563 372,562 374,595 377,612 381,616 385,587 389,560 412,559 415,568 418,558 428,558 431,565 433,565 435,558 447,556 460,556 471,555 473,569 474,569 476,556 486,556 488,574 489,574 491,556 503,556 505,571 507,570 511,555 520,554 523,557 525,554 528,559 531,553 549,552 552,557 555,557 558,550 570,549 595,548 597,569 598,569 600,547 610,546 618,545 622,548 626,545 628,545 631,568 633,579 636,584 638,580 642,563 644,544 648,546 652,543 668,542 674,547 677,542 682,542 685,553 691,542 715,540 717,552 720,554 723,540 733,539 737,545 741,539 747,538 765,537 787,536 788,560 790,579 792,584 795,578 798,560 801,543 811,541 813,552 816,541 824,541 827,542 831,541 833,542 837,541 844,539 847,541 852,539 888,537 891,542 895,536 933,536 937,539 940,535 946,534 949,538 952,534 963,533 966,582 967,582 969,566 973,561 975,547 978,530 981,530 983,547 987,547 990,529 1010,528 1013,532 1017,527 1048,525 1077,524 1080,527 1082,525 1085,533 1089,523 1097,523 1100,525 1104,522 1127,521 1129,530 1132,535 1135,535 1138,521 1140,521 1143,536 1146,536 1149,521 1167,520 1182,519 1184,553 1187,568 1190,576 1192,576 1194,550 1196,517 1227,515 1233,515 1236,521 1239,515 1245,515 1248,525 1251,515 1265,514 1268,518 1272,514 1300,513 1307,513 1309,526 1311,525 1316,511";
const equity = "21,577 55,575 83,574 103,572 135,571 137,576 139,571 155,569 198,567 201,583 205,568 238,565 244,564 273,563 315,560 337,560 341,575 344,582 348,563 370,562 372,570 374,560 389,560 447,556 503,556 531,553 558,550 592,548 595,577 598,547 626,545 652,543 682,542 723,540 775,537 778,588 781,569 785,655 789,542 801,542 852,539 895,536 905,536 908,556 911,536 933,536 961,533 963,550 966,530 990,529 1017,527 1077,524 1104,522 1182,519 1196,517 1251,515 1307,513 1309,511 1316,511";
const trades = [12,23,34,45,56,67,78,89,100,111,122,133,144,155,166,177,188,199,210,221,232,243,254,265,276,287,298,309,320,331,342,353,365,376,387,398,409,420,431,442];
const levels = [12300,11331,10362,9393,8424,7455];

function drawTester(svg) {
  const g = add(svg, "g", { "shape-rendering": "crispEdges" });
  rect(g, 16, 491, 1346, 189, "#fff");
  rect(g, 16, 491, 1, 189, "#a0a0a0");
  levels.forEach((v, i) => {
    if (i < 5) path(g, `M22 ${501 + 32 * i}.5H1317`, "#c4c4c4", { "stroke-dasharray": "4 3" });
    path(g, `M1318 ${i < 5 ? 501 + 32 * i : 661}.5h2`, "#000");
    add(svg, "text", { x: 1322, y: 506 + 32 * i }, v);
  });
  trades.forEach((v, i) => {
    const x = 52 + 32 * i;
    path(g, `M${x}.5 496V661`, "#c4c4c4", { "stroke-dasharray": "4 3" });
    path(g, `M${x}.5 662v2`, "#000");
    add(svg, "text", { x, y: 673, "text-anchor": "end" }, v);
  });
  add(svg, "text", { x: 21, y: 673 }, "0");
  rect(g, 22, 498, 646, 11, "#fff");
  const title = add(svg, "text", { x: 24, y: 507 });
  add(title, "tspan", { fill: "#0000a0" }, "Баланс");
  add(title, "tspan", {}, " / ");
  add(title, "tspan", { fill: "#10a010" }, "Средства");
  add(title, "tspan", {}, " / Все тики (наиболее точный метод на основе всех наименьших доступных таймфреймов для генерации каждого тика) / 90.00%");
  add(svg, "polyline", { points: equity, fill: "none", stroke: "#18981c" });
  add(svg, "polyline", { points: balance, fill: "none", stroke: "#000090", "stroke-width": 2 });
  path(g, "M20.500 495.500H1317.500V662.500H20.500Z", "#000");
}

drawMarket(document.getElementById("market"));
drawTester(document.getElementById("tester"));
```
